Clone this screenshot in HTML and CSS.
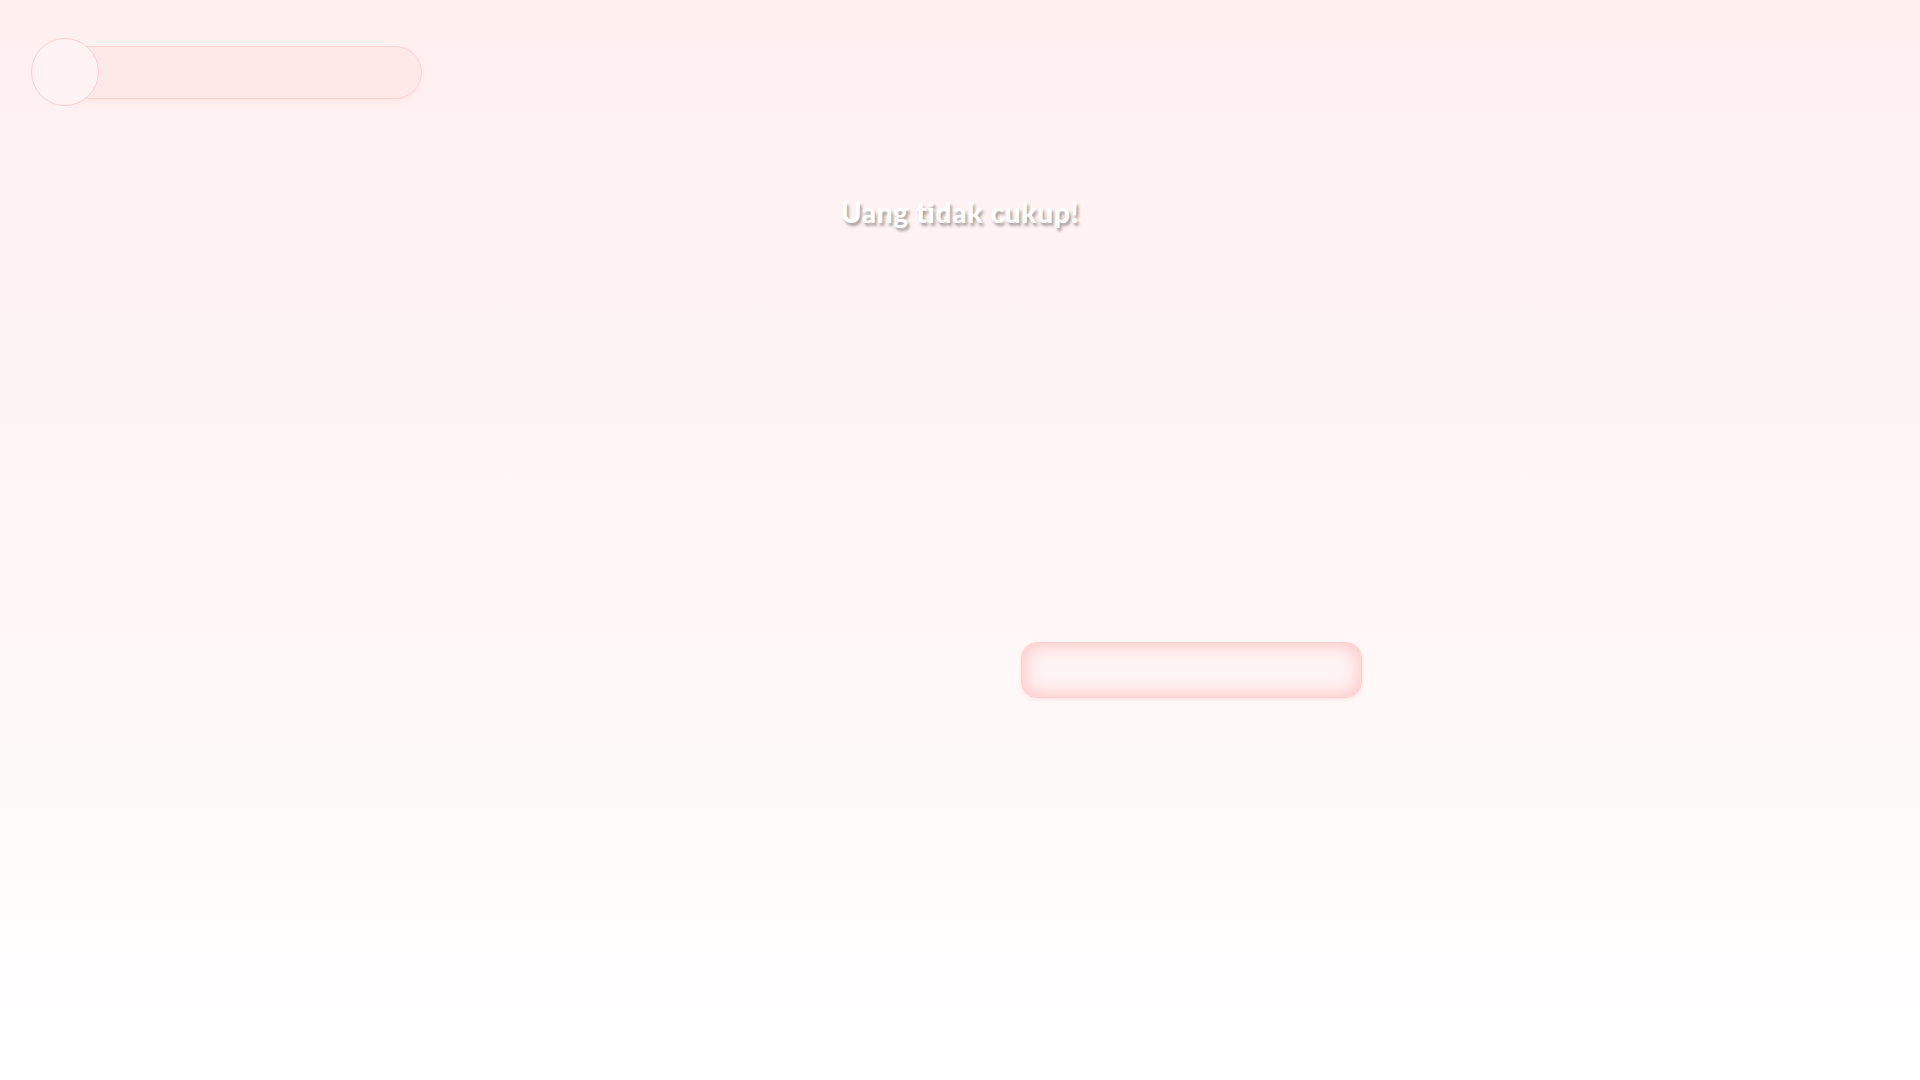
FILE: index.html
```html
<!DOCTYPE html>
<html lang="id">
<head>
<meta charset="utf-8">
<title>Uang tidak cukup</title>
<link rel="stylesheet" href="styles.css">
</head>
<body>
<div class="page">
  <header class="top">
    <div class="wallet">
      <div class="coin"></div>
      <div class="bar"></div>
    </div>
  </header>
  <h1 class="msg">Uang tidak cukup!</h1>
  <div class="actions">
    <button class="btn" type="button"></button>
  </div>
</div>
</body>
</html>
```
FILE: styles.css
```css
html, body {
  margin: 0;
  padding: 0;
  height: 100%;
}
body {
  background: linear-gradient(180deg, #fff0f0 0%, #fff6f6 50%, #ffffff 100%);
  font-family: Lato, "Liberation Sans", sans-serif;
  overflow: hidden;
}
.page {
  display: flex;
  flex-direction: column;
  min-height: 1080px;
}
.top {
  padding: 38px 0 0 31px;
}
.wallet {
  display: flex;
  align-items: center;
}
.coin {
  position: relative;
  z-index: 2;
  width: 66px;
  height: 66px;
  border-radius: 50%;
  border: 1px solid #ffcccc;
  background: #fff3f3;
  flex-shrink: 0;
}
.bar {
  margin-left: -48px;
  width: 369px;
  height: 51px;
  border-radius: 27px;
  border: 1px solid #ffd2d2;
  background: #ffe8e8;
  box-shadow: 0 3px 5px rgba(255, 200, 200, 0.25);
}
.msg {
  margin: 89px 0 0;
  font-size: 28px;
  line-height: 34px;
  font-weight: 900;
  letter-spacing: 0.7px;
  color: #ffffff;
  text-align: center;
  text-shadow: 2px 3px 3px rgba(0, 0, 0, 0.35);
}
.actions {
  display: flex;
  padding-left: 1021px;
  margin-top: 413px;
}
.btn {
  width: 341px;
  height: 56px;
  border-radius: 16px;
  border: 1px solid #ffd0d0;
  background: #fff4f4;
  box-shadow: inset 0 0 18px 3px #ffc6c6, 0 2px 4px rgba(255, 190, 190, 0.3);
  padding: 0;
  cursor: pointer;
}
```
